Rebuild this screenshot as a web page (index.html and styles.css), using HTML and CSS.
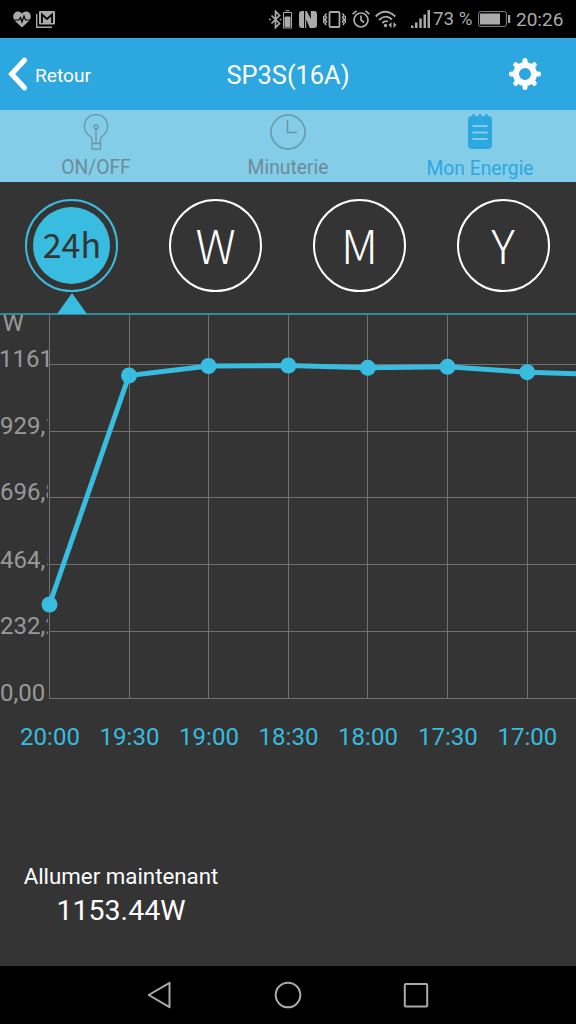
FILE: index.html
```html
<!DOCTYPE html>
<html lang="fr">
<head>
    <meta charset="utf-8">
    <title>SP3S(16A)</title>
    <link rel="stylesheet" href="styles.css">
</head>
<body>
    <div class="status-bar">
        <svg class="icon-heart" width="18" height="17" viewBox="0 0 18 17">
            <path fill="#aaa" d="M9 16.5 1.500 9.500C-1 6.500.3.500 5 .500 7 .500 8.300 1.500 9 2.700 9.700 1.500 11 .500 13 .500c4.700 0 6 5.500 3.500 9z"/>
            <path fill="none" stroke="#000" stroke-width="1.200" d="M0 9h6l1.500-2.500L9 11l2-6 1.500 4H18"/>
        </svg>
        <svg class="icon-mail" width="19" height="17" viewBox="0 0 19 17">
            <path fill="none" stroke="#aaa" stroke-width="1.400" d="M.7 3v13.300H16"/>
            <rect x="3" y="0" width="16" height="13.500" rx="1" fill="#aaa"/>
            <path fill="none" stroke="#000" stroke-width="1.800" d="M6 12V3.500l5 4.500 5-4.500V12"/>
        </svg>

        <svg class="icon-bluetooth" width="24" height="19" viewBox="0 0 24 19" fill="none" stroke="#aaa">
            <path stroke-width="1.700" d="M2.500 5.500l8 8-4 4.200V1.300l4 4.200-8 8"/>
            <path stroke-width="1.500" d="M0 9.500h1.800M10.800 9.500h1.600"/>
            <path d="M14.500 2.500h8v15.500h-8zM16.500.7h4"/>
            <path fill="#aaa" d="M16 7h5v9.500h-5z"/>
        </svg>
        <svg class="icon-nfc" width="18" height="17" viewBox="0 0 18 17" fill="#aaa">
            <path d="M5 0H3Q0 0 0 3v11q0 3 3 3h2zM13 17h2q3 0 3-3V3q0-3-3-3h-2z"/>
            <path d="M6.200 0h1.500l4.100 8V0h1.200v17h-2.200L7.200 8.500V17H6z"/>
        </svg>
        <svg class="icon-vibrate" width="23" height="17" viewBox="0 0 23 17" fill="none" stroke="#aaa">
            <rect x="6.500" y="1" width="10" height="15" rx="1" stroke-width="1.800"/>
            <path stroke-width="1.500" d="M3.500 2.500l-1.500 2 1.500 2-1.500 2 1.500 2-1.500 2 1 1.500M.7 5v7M19.500 2.500l1.500 2-1.500 2 1.500 2-1.500 2 1.500 2-1 1.500M22.300 5v7"/>
        </svg>
        <svg class="icon-alarm" width="18" height="18" viewBox="0 0 18 18" fill="none" stroke="#aaa" stroke-width="1.700">
            <circle cx="9" cy="10" r="7"/>
            <path d="M9 5.500V10l3 2.500M.6 4.200 4.600.8M17.400 4.200l-4-3.400"/>
        </svg>
        <svg class="icon-wifi" width="22" height="18" viewBox="0 0 22 18" fill="none" stroke="#aaa" stroke-width="1.800">
            <path d="M.7 6.500Q10-3 20.300 6.500M4 10Q10.500 3.500 17 9.500M7.300 13Q10 10.500 13 11.500"/>
            <circle cx="10.500" cy="15.500" r="1.700" fill="#aaa" stroke="none"/>
            <path fill="#aaa" stroke="none" d="M13.500 15l3-3v6zM21.500 15l-3-3v6z"/>
        </svg>
        <svg class="icon-signal" width="20" height="18" viewBox="0 0 20 18" fill="#aaa">
            <path d="M0 15.500h2.500V18H0zM4 12.500h2.500V18H4zM8.300 8.500h2.500V18H8.300zM12.500 4.500H15V18h-2.500zM16.500 0H19v18h-2.500z"/>
        </svg>
        <span class="battery-level">73 %</span>
        <svg class="icon-battery" width="33" height="16" viewBox="0 0 33 16">
            <rect x=".6" y=".6" width="27.800" height="14.800" rx="2" fill="none" stroke="#888"/>
            <path fill="#aaa" d="M2 2.500h20v11H2zM30 4h2.200v8H30z"/>
        </svg>
        <span class="clock">20:26</span>
    </div>

    <div class="header">
        <div class="back">
            <svg width="20" height="34" viewBox="0 0 20 34">
                <path fill="none" stroke="#fff" stroke-width="5.200" stroke-linecap="round" stroke-linejoin="miter" d="M16.400 3.200 3.700 17l12.700 13.800"/>
            </svg>
            <span>Retour</span>
        </div>
        <div class="title">SP3S(16A)</div>
        <svg class="settings" width="32" height="32" viewBox="-16 -16 32 32">
            <g fill="none" stroke="#fff" stroke-width="5">
                <path stroke-linecap="round" d="M0-13.500v27M-13.500 0h27M-9.300-9.300 9.300 9.300M-9.300 9.300 9.300-9.300"/>
            </g>
            <circle r="9" fill="#2da7df" stroke="#fff" stroke-width="6"/>
        </svg>
    </div>

    <div class="tabs">
        <div class="tab">
            <svg width="26" height="37" viewBox="0 0 26 37" fill="none" stroke="#6c95a4" stroke-width="1.300">
                <path d="M9 29.500V26Q9 23 5 20.500A11.600 11.600 0 1 1 21 20.500Q17.500 23 17.500 26v3.500zM9 29.500v5.500h8.500v-5.500M13 29.500V15"/>
                <circle cx="13" cy="13" r="2"/>
            </svg>
            <span>ON/OFF</span>
        </div>
        <div class="tab">
            <svg width="36" height="37" viewBox="0 0 36 37" fill="none" stroke="#6c95a4" stroke-width="1.500">
                <circle cx="18" cy="18" r="17"/>
                <path d="M17.500 6v12.500H27"/>
            </svg>
            <span>Minuterie</span>
        </div>
        <div class="tab active">
            <svg width="24" height="38" viewBox="0 0 24 38">
                <path fill="none" stroke="#2da7df" stroke-width="2.400" d="M5.500 0v5M12 0v5M18.500 0v5"/>
                <rect y="2" width="24" height="33" rx="4" fill="#2da7df"/>
                <path stroke="#84cde9" stroke-width="1.800" stroke-linecap="round" d="M5 12h14M5 18.500h14M5 25h14"/>
            </svg>
            <span>Mon Energie</span>
        </div>
    </div>

    <div class="periods">
        <div class="period selected"><span>24h</span></div>
        <div class="period"><span>W</span></div>
        <div class="period"><span>M</span></div>
        <div class="period"><span>Y</span></div>
    </div>

    <svg class="chart" width="576" height="451" viewBox="0 315 576 451">
        <defs>
            <clipPath id="axis-clip"><rect x="0" y="300" width="47.800" height="415"/></clipPath>
        </defs>

        <!-- grid -->
        <path class="grid" d="M49.500 315v384M129.500 315v384M208.500 315v384M288.500 315v384M367.500 315v384M447.500 315v384M527.500 315v384"/>
        <path class="grid" d="M50 364.500h526M50 431.500h526M50 497.500h526M50 564.500h526M50 631.500h526M50 698.500h526"/>

        <g class="y-labels">
            <text x="2.500" y="331">W</text>
            <text x="-1" y="367">1161</text>
            <g clip-path="url(#axis-clip)">
                <text x="0" y="433.500">929,12</text>
                <text x="0" y="500">696,84</text>
                <text x="0" y="567.500">464,56</text>
                <text x="0" y="634">232,28</text>
                <text x="0" y="701">0,00</text>
            </g>
        </g>

        <!-- consumption -->
        <polyline class="line" points="49.500,604.500 129,375.500 208.500,366 288.300,365.500 367.800,367.800 447.500,366.800 527.200,372.200 580,374"/>
        <g class="dots">
            <circle cx="49.500" cy="604.500" r="8"/>
            <circle cx="129" cy="375.500" r="8"/>
            <circle cx="208.500" cy="366" r="8"/>
            <circle cx="288.300" cy="365.500" r="8"/>
            <circle cx="367.800" cy="367.800" r="8"/>
            <circle cx="447.500" cy="366.800" r="8"/>
            <circle cx="527.200" cy="372.200" r="8"/>
        </g>

        <g class="x-labels">
            <text x="50" y="745">20:00</text>
            <text x="129.500" y="745">19:30</text>
            <text x="209" y="745">19:00</text>
            <text x="288.500" y="745">18:30</text>
            <text x="368" y="745">18:00</text>
            <text x="447.800" y="745">17:30</text>
            <text x="527.300" y="745">17:00</text>
        </g>
    </svg>

    <div class="current">
        <div class="current-label">Allumer maintenant</div>
        <div class="current-value">1153.44W</div>
    </div>

    <div class="nav-bar">
        <svg width="28" height="30" viewBox="0 0 28 30">
            <path d="M2.700 15 23.500 2.800v24.400z"/>
        </svg>
        <svg width="28" height="30" viewBox="0 0 28 30">
            <circle cx="14" cy="15" r="12.300"/>
        </svg>
        <svg width="28" height="30" viewBox="0 0 28 30">
            <rect x="2.800" y="4" width="22.400" height="22.400" rx="1"/>
        </svg>
    </div>
</body>
</html>
```
FILE: styles.css
```css
body {
    width: 576px;
    height: 1024px;
    margin: 0;
    display: flex;
    flex-direction: column;
    overflow: hidden;
    background: #343434;
    color: #fff;
    font-family: Roboto, sans-serif;
}

svg {
    display: block;
    flex-shrink: 0;
}

.status-bar {
    display: flex;
    align-items: center;
    height: 38px;
    box-sizing: border-box;
    padding: 0 12px 0 13px;
    background: #000;
    color: #aaa;
    font-size: 19px;
    white-space: nowrap;
}

.icon-mail {
    margin-left: 5px;
}

.icon-bluetooth {
    margin-left: auto;
}

.icon-nfc {
    margin-left: 6px;
}

.icon-vibrate {
    margin-left: 6px;
}

.icon-alarm {
    margin-left: 6px;
}

.icon-wifi {
    margin-left: 5px;
}

.icon-signal {
    margin-left: 14px;
}

.battery-level {
    width: 45px;
    margin-left: 2px;
    font-size: 18.800px;
}

.icon-battery {
    margin-right: 5px;
}

.clock {
    width: 48px;
    padding-top: 1px;
}

.header {
    display: grid;
    grid-template-columns: 1fr auto 1fr;
    align-items: center;
    height: 72px;
    background: #2da7df;
}

.back {
    display: flex;
    align-items: center;
    gap: 7px;
    padding-left: 8px;
    font-size: 19.200px;
}

.back span {
    padding-top: 2px;
}

.title {
    padding-top: 2px;
    font-size: 25.400px;
}

.settings {
    justify-self: end;
    margin-right: 35px;
}

.tabs {
    display: flex;
    height: 72px;
    background: #84cde9;
    color: #6c8b97;
    font-size: 19.300px;
}

.tab {
    display: flex;
    flex: 1;
    flex-direction: column;
    align-items: center;
    box-sizing: border-box;
    padding-top: 4px;
    line-height: 33px;
    white-space: nowrap;
}

.tab.active {
    color: #2da7df;
}

.periods {
    display: flex;
    justify-content: space-around;
    height: 133px;
    box-sizing: border-box;
    padding: 17px 1px 0 0;
    border-bottom: 2px solid #3189a0;
}

.period {
    position: relative;
    display: flex;
    align-items: center;
    justify-content: center;
    width: 93px;
    height: 93px;
    box-sizing: border-box;
    border: 2px solid #fff;
    border-radius: 50%;
    font-family: "Noto Sans CJK SC", sans-serif;
    font-size: 47px;
    font-weight: 300;
    line-height: 77px;
}

.period span {
    padding-bottom: 5px;
}

.selected {
    border-color: #38bcdf;
    color: #343434;
    font-size: 34px;
    font-weight: 400;
}

.selected span {
    width: 77px;
    height: 77px;
    padding: 0;
    border-radius: 50%;
    background: #38bcdf;
    line-height: 74px;
    text-align: center;
}

/* pointer to the chart */
.selected::after {
    content: "";
    position: absolute;
    top: 92px;
    left: 50%;
    margin-left: -15px;
    border: 15px solid transparent;
    border-top: 0;
    border-bottom: 21px solid #38bcdf;
}

.chart .grid {
    fill: none;
    stroke: #717171;
}

.y-labels {
    fill: #999;
    font-size: 24px;
}

.x-labels {
    fill: #38bcdf;
    font-size: 24px;
    text-anchor: middle;
}

.line {
    fill: none;
    stroke: #38bcdf;
    stroke-width: 5;
}

.dots {
    fill: #38bcdf;
}

.current {
    flex: 1;
    width: 242px;
    padding-top: 96px;
    text-align: center;
}

.current-label {
    font-size: 22.300px;
    line-height: 28px;
}

.current-value {
    font-size: 28.500px;
    line-height: 42px;
}

.nav-bar {
    display: flex;
    justify-content: space-between;
    height: 58px;
    align-items: center;
    box-sizing: border-box;
    padding: 0 146px;
    background: #000;
}

.nav-bar svg {
    fill: none;
    stroke: #aaa;
    stroke-width: 2;
    stroke-linejoin: round;
}
```
